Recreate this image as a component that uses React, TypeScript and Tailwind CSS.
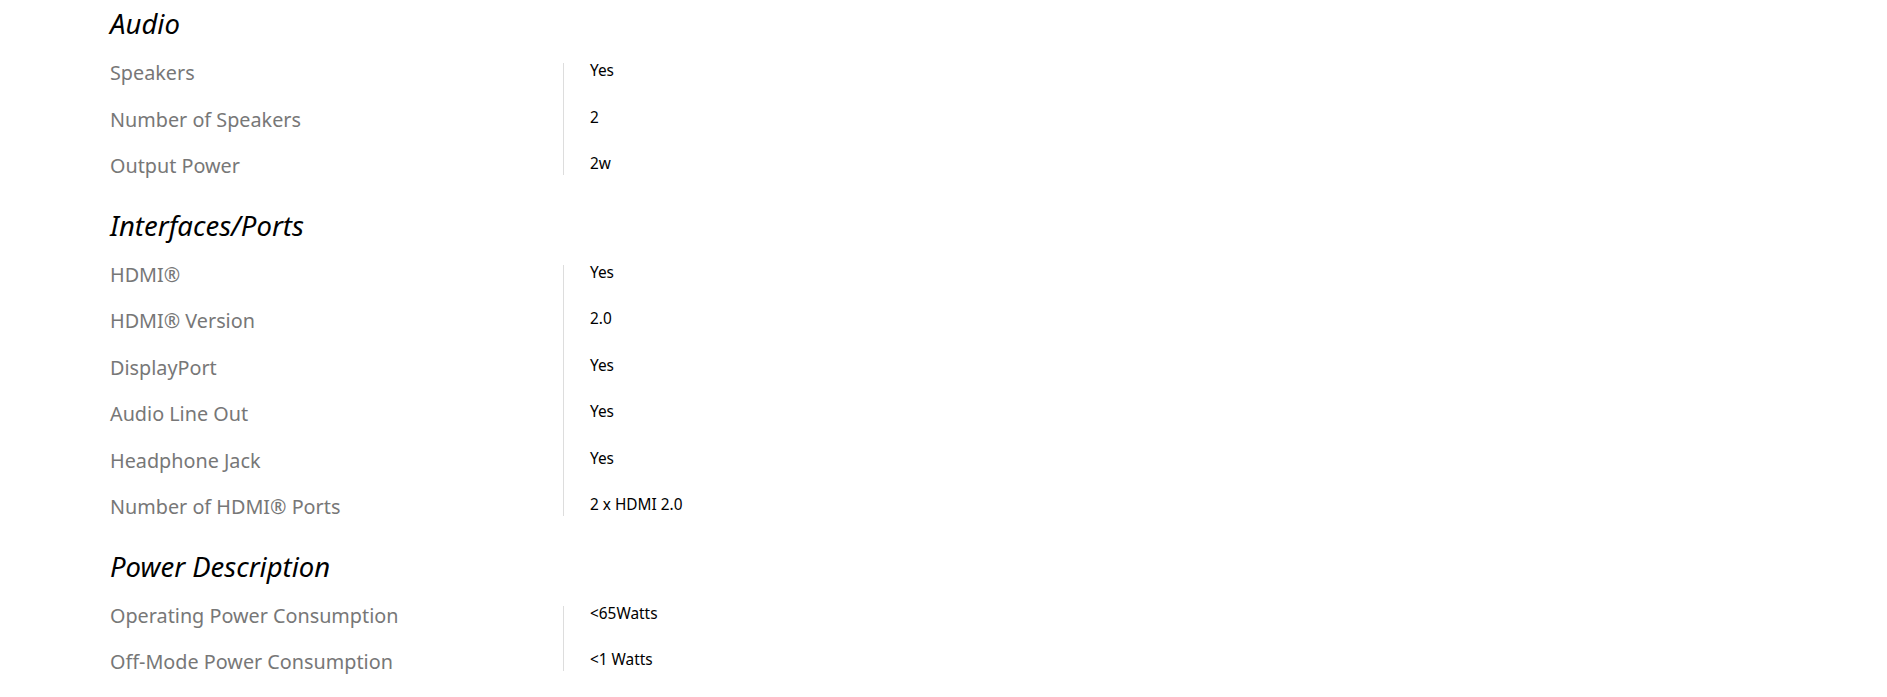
import React from 'react'

interface Spec {
  label: string
  value: string
}

interface Section {
  title: string
  specs: Spec[]
}

const sections: Section[] = [
  {
    title: 'Audio',
    specs: [
      { label: 'Speakers', value: 'Yes' },
      { label: 'Number of Speakers', value: '2' },
      { label: 'Output Power', value: '2w' },
    ],
  },
  {
    title: 'Interfaces/Ports',
    specs: [
      { label: 'HDMI®', value: 'Yes' },
      { label: 'HDMI® Version', value: '2.0' },
      { label: 'DisplayPort', value: 'Yes' },
      { label: 'Audio Line Out', value: 'Yes' },
      { label: 'Headphone Jack', value: 'Yes' },
      { label: 'Number of HDMI® Ports', value: '2 x HDMI 2.0' },
    ],
  },
  {
    title: 'Power Description',
    specs: [
      { label: 'Operating Power Consumption', value: '<65Watts' },
      { label: 'Off-Mode Power Consumption', value: '<1 Watts' },
    ],
  },
]

const SpecSection = ({ title, specs }: Section) => {
  return (
    <div className="mt-[13px] first:mt-0">
      <h3 className="text-[27.5px] leading-[46px] pt-[1px] pb-[2px] italic font-normal text-black">{title}</h3>
      <div className="flex">
        <div className="w-[453px] flex flex-col">
          {specs.map((s) => (
            <div key={s.label} className="h-[46.5px] pt-[2px] leading-[44.5px] text-[19.8px] text-[#777777]">
              {s.label}
            </div>
          ))}
        </div>
        <div className="mt-[14px] self-start border-l border-[#dddddd] pl-[26px] pb-[3px] flex flex-col gap-[30.5px]">
          {specs.map((s) => (
            <div key={s.label} className="leading-[16px] text-[15.4px] text-black">
              {s.value}
            </div>
          ))}
        </div>
      </div>
    </div>
  )
}

const App = () => {
  return (
    <div className="w-[1887px] h-[697px] overflow-hidden bg-white pl-[110px] font-['Noto_Sans',sans-serif]">
      {sections.map((sec) => (
        <SpecSection key={sec.title} title={sec.title} specs={sec.specs} />
      ))}
    </div>
  )
}

export default App
